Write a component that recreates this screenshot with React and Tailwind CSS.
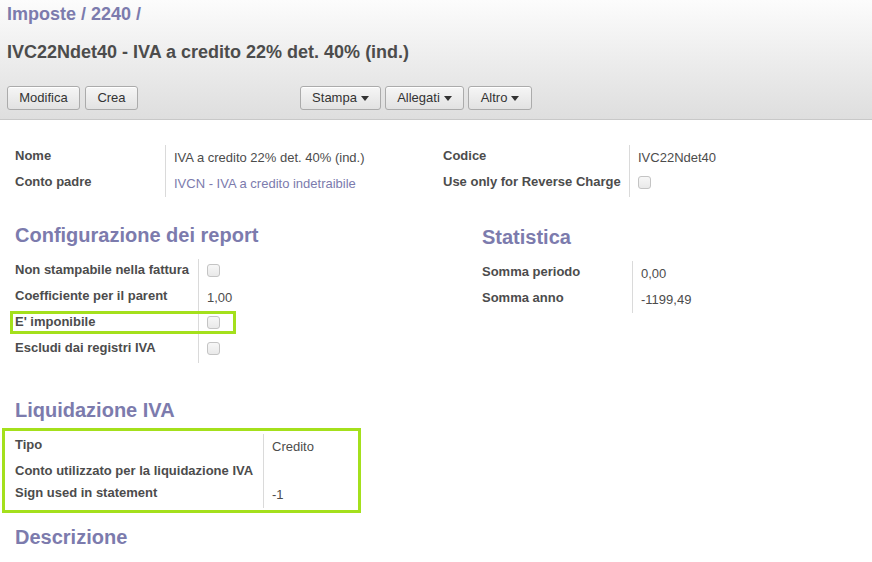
import React from "react";

const Caret = () => (
  <svg width="8" height="5" viewBox="0 0 8 5" className="ml-[4px] inline-block">
    <path d="M0 0 L8 0 L4 5 Z" fill="#333" />
  </svg>
);

const Btn = ({ children, w, caret }) => (
  <button
    className={`h-[24px] ${w} rounded-[3px] border border-[#ababab] bg-gradient-to-b from-[#f6f6f6] to-[#e2e2e2] text-[13px] text-[#333] leading-[22px] flex items-center justify-center shadow-[inset_0_1px_0_#fff]`}
  >
    {children}
    {caret && <Caret />}
  </button>
);

const Check = () => (
  <div className="w-[13px] h-[13px] rounded-[3px] border border-[#c4c4c4] bg-gradient-to-b from-[#f7f7f7] to-[#e9e9e9]" />
);

const Row = ({ label, value, lw, link, check, children }) => (
  <div className="relative flex">
    <div
      className={`${lw} shrink-0 pt-[3px] pb-[3px] leading-[16px] text-[13px] font-bold text-[#4c4c4c]`}
    >
      {label}
    </div>
    <div
      className={`border-l border-[#dadada] pl-[8px] ${check ? "pt-[5px] h-[26px]" : "pt-[5px] pb-[5px]"} leading-[16px] text-[13px] ${link ? "text-[#7c7bad]" : "text-[#4c4c4c]"}`}
    >
      {check ? <Check /> : value}
    </div>
    {children}
  </div>
);

const H = ({ children, cls = "" }) => (
  <div className={`text-[20px] leading-[24px] font-bold text-[#7c7bad] ${cls}`}>{children}</div>
);

export default function App() {
  return (
    <div
      className="w-[872px] h-[562px] bg-white overflow-hidden"
      style={{ fontFamily: '"Liberation Sans", Arial, sans-serif' }}
    >
      <div className="h-[120px] border-b border-[#c8c8c8] bg-gradient-to-b from-[#fcfcfc] to-[#dedede] px-[7px] pt-[3px]">
        <div className="text-[18px] leading-[22px] font-bold text-[#7c7bad]">Imposte / 2240 /</div>
        <div className="mt-[16px] text-[18px] leading-[22px] font-bold text-[#4c4c4c]">
          IVC22Ndet40 - IVA a credito 22% det. 40% (ind.)
        </div>
        <div className="mt-[23px] flex">
          <div className="w-[293px] flex gap-[5px]">
            <Btn w="w-[73px]">Modifica</Btn>
            <Btn w="w-[53px]">Crea</Btn>
          </div>
          <div className="flex gap-[4px]">
            <Btn w="w-[81px]" caret>Stampa</Btn>
            <Btn w="w-[79px]" caret>Allegati</Btn>
            <Btn w="w-[64px]" caret>Altro</Btn>
          </div>
        </div>
      </div>

      <div className="pl-[15px] pt-[25px]">
        <div className="flex">
          <div className="w-[428px]">
            <Row lw="w-[150px]" label="Nome" value="IVA a credito 22% det. 40% (ind.)" />
            <Row lw="w-[150px]" label="Conto padre" value="IVCN - IVA a credito indetraibile" link />
          </div>
          <div>
            <Row lw="w-[186px]" label="Codice" value="IVC22Ndet40" />
            <Row lw="w-[186px]" label="Use only for Reverse Charge" check />
          </div>
        </div>

        <div className="flex mt-[26px]">
          <div className="w-[467px]">
            <H>Configurazione dei report</H>
            <div className="mt-[12px]">
              <Row lw="w-[183px]" label="Non stampabile nella fattura" check />
              <Row lw="w-[183px]" label="Coefficiente per il parent" value="1,00" />
              <Row lw="w-[183px]" label="E' imponibile" check>
                <div className="absolute left-[-5px] top-[0px] w-[226px] h-[23px] border-[3px] border-[#a4e01c] pointer-events-none" />
              </Row>
              <Row lw="w-[183px]" label="Escludi dai registri IVA" check />
            </div>
          </div>
          <div className="pt-[2px]">
            <H>Statistica</H>
            <div className="mt-[12px]">
              <Row lw="w-[150px]" label="Somma periodo" value="0,00" />
              <Row lw="w-[150px]" label="Somma anno" value="-1199,49" />
            </div>
          </div>
        </div>

        <H cls="mt-[35px]">Liquidazione IVA</H>
        <div className="ml-[-13px] mt-[6px] w-[359px] border-[3px] border-[#a4e01c] pl-[10px] pt-[3px] pb-[2px]">
          <Row lw="w-[248px]" label="Tipo" value="Credito" />
          <Row lw="w-[248px]" label="Conto utilizzato per la liquidazione IVA" value="" />
          <Row lw="w-[248px]" label="Sign used in statement" value="-1" />
        </div>

        <H cls="mt-[12px]">Descrizione</H>
      </div>
    </div>
  );
}
